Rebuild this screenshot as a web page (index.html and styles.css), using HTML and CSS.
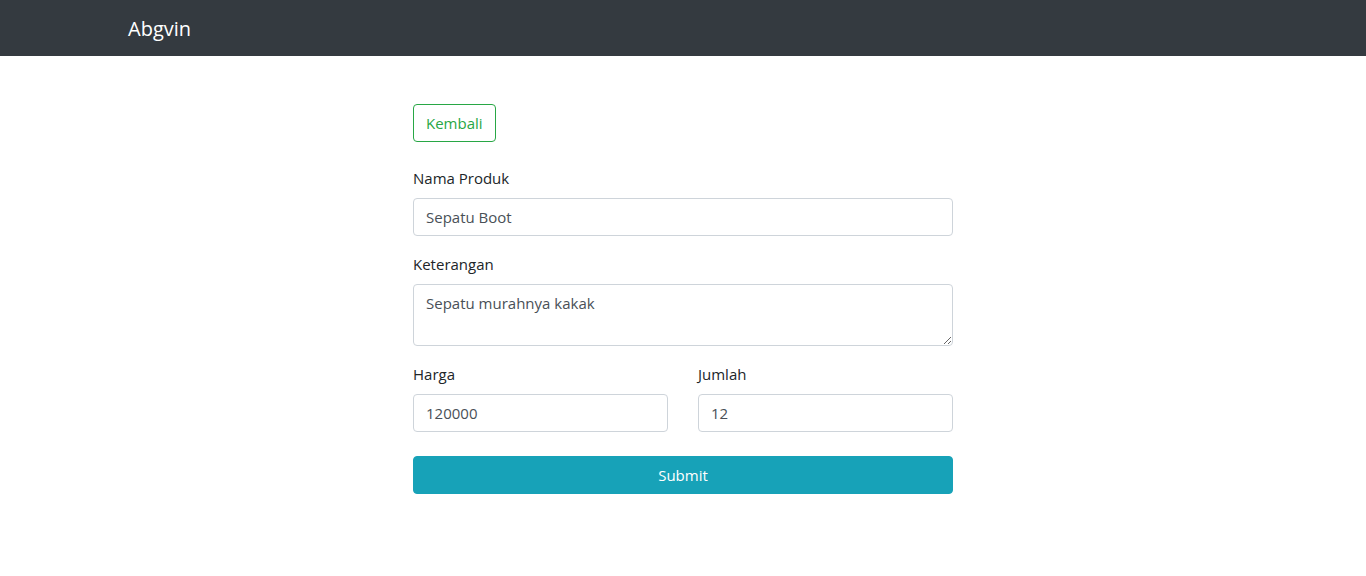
FILE: index.html
```html
<!DOCTYPE html>
<html lang="id">
<head>
<meta charset="utf-8">
<title>Abgvin</title>
<link rel="stylesheet" href="styles.css">
</head>
<body>
<nav class="navbar">
  <div class="container">
    <a class="brand" href="#">Abgvin</a>
  </div>
</nav>
<main class="container">
  <div class="form-col">
    <a class="btn btn-outline-success" href="#">Kembali</a>
    <form class="form">
      <div class="form-group">
        <label class="label">Nama Produk</label>
        <input class="control" type="text" value="Sepatu Boot">
      </div>
      <div class="form-group">
        <label class="label">Keterangan</label>
        <textarea class="control textarea" rows="2">Sepatu murahnya kakak</textarea>
      </div>
      <div class="row">
        <div class="form-group">
          <label class="label">Harga</label>
          <input class="control" type="text" value="120000">
        </div>
        <div class="form-group">
          <label class="label">Jumlah</label>
          <input class="control" type="text" value="12">
        </div>
      </div>
      <button class="btn btn-info" type="button">Submit</button>
    </form>
  </div>
</main>
</body>
</html>
```
FILE: styles.css
```css
* { box-sizing: border-box; }
html, body { margin: 0; padding: 0; }
body {
  font-family: "Open Sans", "Noto Sans", sans-serif;
  font-size: 15px;
  line-height: 24px;
  color: #212529;
  background: #fff;
}
.container {
  width: 1140px;
  margin: 0 auto;
  padding: 0 15px;
}
.navbar {
  background: #343a40;
  height: 56px;
  display: flex;
  align-items: center;
}
.brand {
  display: inline-block;
  color: #fff;
  text-decoration: none;
  font-size: 20px;
  line-height: 30px;
  padding-top: 2px;
}
.form-col {
  width: 540px;
  margin: 48px auto 0;
}
.btn {
  display: inline-block;
  height: 38px;
  padding: 6px 12px;
  border: 1px solid transparent;
  border-radius: 4px;
  font-family: inherit;
  font-size: 15px;
  line-height: 24px;
  text-decoration: none;
  text-align: center;
  cursor: pointer;
}
.btn-outline-success {
  color: #28a745;
  border-color: #28a745;
  background: transparent;
}
.form { margin-top: 24px; }
.form-group { margin-bottom: 16px; }
.label {
  display: block;
  margin-bottom: 8px;
}
.control {
  display: block;
  width: 100%;
  height: 38px;
  padding: 6px 12px;
  font-family: inherit;
  font-size: 15px;
  line-height: 24px;
  color: #495057;
  background: #fff;
  border: 1px solid #ced4da;
  border-radius: 4px;
  margin: 0;
}
.textarea {
  height: 62px;
  resize: vertical;
}
.row {
  display: grid;
  grid-template-columns: 1fr 1fr;
  column-gap: 30px;
}
.btn-info {
  display: block;
  width: 100%;
  margin-top: 8px;
  color: #fff;
  background: #17a2b8;
  border-color: #17a2b8;
}
```
